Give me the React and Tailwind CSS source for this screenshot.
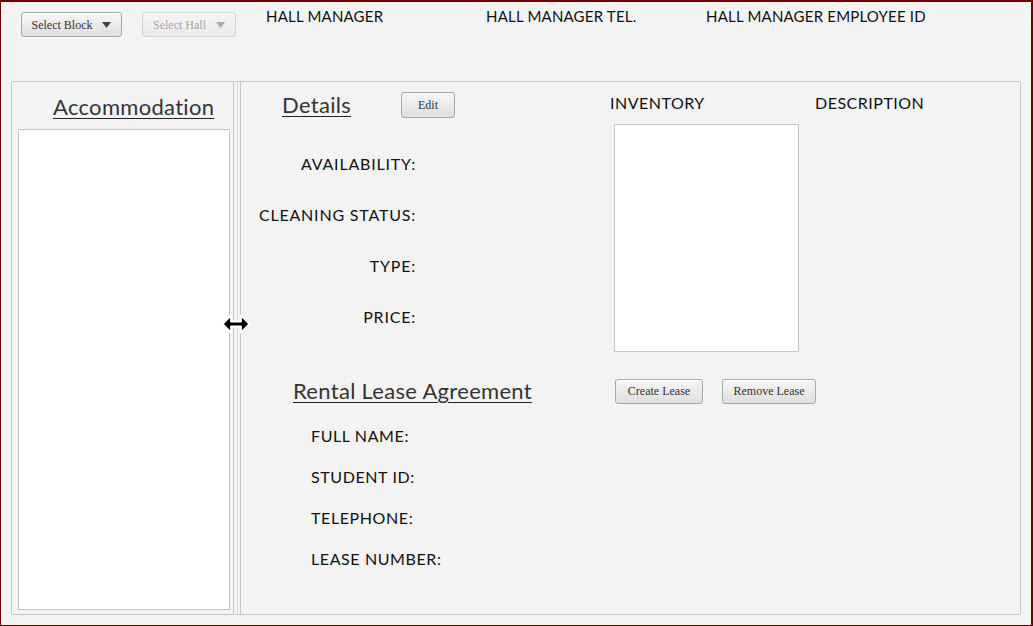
import React from 'react';

const sans = { fontFamily: 'Lato, "Open Sans", sans-serif' };
const serif = { fontFamily: '"Liberation Serif", "DejaVu Serif", serif' };

function Btn({ label, w, arrow, disabled }) {
  return (
    <div
      style={serif}
      className={`h-[25px] ${w} flex items-center justify-center gap-[10px] rounded-[3px] border border-[#a9a9a9] bg-gradient-to-b from-[#f7f7f7] to-[#dedede] text-[12px] text-[#333] shadow-[inset_0_1px_0_#ffffff] ${disabled ? 'opacity-40' : ''}`}
    >
      <span>{label}</span>
      {arrow && (
        <svg width="9" height="6" viewBox="0 0 9 6">
          <path d="M0 0 H9 L4.5 6 Z" fill="#444" />
        </svg>
      )}
    </div>
  );
}

function Title({ children }) {
  return (
    <span style={sans} className="text-[22px] leading-[26px] font-normal tracking-[0.3px] text-[#333] underline decoration-[1px] underline-offset-[3px] decoration-[#222]">
      {children}
    </span>
  );
}

export default function App() {
  const details = ['AVAILABILITY:', 'CLEANING STATUS:', 'TYPE:', 'PRICE:'];
  const lease = ['FULL NAME:', 'STUDENT ID:', 'TELEPHONE:', 'LEASE NUMBER:'];

  return (
    <div className="w-[1033px] h-[626px] flex flex-col bg-[#f3f3f3] border-t-2 border-r-2 border-l border-b border-[#700000] overflow-hidden">
      {/* top bar */}
      <div className="h-[79px] flex items-start pl-[20px] pt-[4px]">
        <div className="mt-[6px]">
          <Btn label="Select Block" w="w-[101px]" arrow />
        </div>
        <div className="mt-[6px] ml-[20px]">
          <Btn label="Select Hall" w="w-[94px]" arrow disabled />
        </div>
        <div style={sans} className="flex text-[15px] leading-[20px] text-[#111] tracking-[0.2px]">
          <span className="ml-[30px] w-[220px]">HALL MANAGER</span>
          <span className="w-[220px]">HALL MANAGER TEL.</span>
          <span>HALL MANAGER EMPLOYEE ID</span>
        </div>
      </div>

      {/* split pane */}
      <div className="flex-1 mx-[10px] mb-[10px] border border-[#c8c8c8] flex relative">
        {/* left */}
        <div className="w-[221px] flex flex-col pl-[6px] pr-[3px] pb-[4px]">
          <div className="h-[47px] flex items-center pl-[35px] pt-[2px]">
            <Title>Accommodation</Title>
          </div>
          <div className="flex-1 bg-white border border-[#c8c8c8]" />
        </div>

        {/* divider */}
        <div className="w-[8px] border-l border-r border-[#c8c8c8] flex justify-center">
          <div className="w-[1px] bg-[#dedede]" />
        </div>

        {/* resize cursor */}
        <svg className="absolute left-[209px] top-[231px]" width="30" height="22" viewBox="0 0 30 22">
          <path d="M1.5 11 L10 2.5 V8.5 H20 V2.5 L28.5 11 L20 19.5 V13.5 H10 V19.5 Z" fill="#000" stroke="#fff" strokeWidth="1.8" strokeLinejoin="round" />
        </svg>

        {/* right */}
        <div className="flex-1 flex flex-col">
          <div className="flex items-start">
            <div className="w-[369px] pt-[10px]">
              <div className="flex items-center h-[26px] pl-[41px]">
                <div className="w-[119px]">
                  <Title>Details</Title>
                </div>
                <div
                  style={serif}
                  className="h-[26px] w-[54px] flex items-center justify-center rounded-[3px] border border-[#a9a9a9] bg-gradient-to-b from-[#f7f7f7] to-[#dedede] text-[12px] text-[#333]"
                >
                  Edit
                </div>
              </div>
              <div className="mt-[20px]">
                {details.map((d) => (
                  <div key={d} style={sans} className="h-[51px] w-[175px] flex items-center justify-end text-[16px] tracking-[0.8px] text-[#111]">
                    {d}
                  </div>
                ))}
              </div>
            </div>
            <div className="w-[205px] pt-[11px]">
              <div style={sans} className="text-[16px] leading-[20px] tracking-[0.5px] text-[#111]">INVENTORY</div>
              <div className="mt-[11px] ml-[4px] w-[185px] h-[228px] bg-white border border-[#c8c8c8]" />
            </div>
            <div className="pt-[11px]">
              <div style={sans} className="text-[16px] leading-[20px] tracking-[0.5px] text-[#111]">DESCRIPTION</div>
            </div>
          </div>

          <div className="mt-[26px] flex items-center h-[26px]">
            <div className="w-[374px] pl-[52px]">
              <Title>Rental Lease Agreement</Title>
            </div>
            <Btn label="Create Lease" w="w-[88px]" />
            <div className="ml-[19px]">
              <Btn label="Remove Lease" w="w-[94px]" />
            </div>
          </div>

          <div className="mt-[11px] pl-[70px]">
            {lease.map((d) => (
              <div key={d} style={sans} className="h-[41px] flex items-center text-[16px] tracking-[0.6px] text-[#111]">
                {d}
              </div>
            ))}
          </div>
        </div>
      </div>
    </div>
  );
}
